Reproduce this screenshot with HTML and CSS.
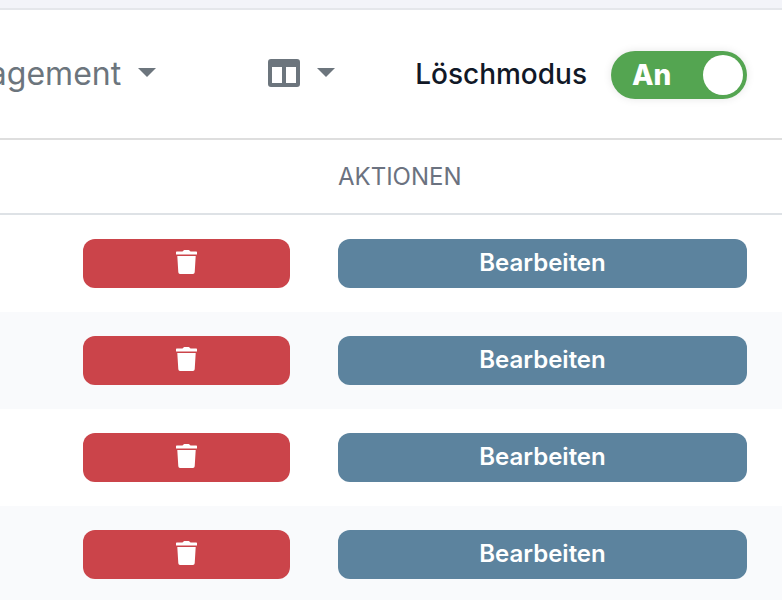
FILE: index.html
```
<!DOCTYPE html>
<html lang="de">
<head>
    <meta charset="UTF-8">
    <meta name="viewport" content="width=device-width, initial-scale=1.0">
    <title>Management</title>
    <link rel="stylesheet" href="styles.css">
</head>
<body>
<div class="card">
    <div class="toolbar">
        <button class="dropdown" type="button">
            <span>agement</span>
            <span class="caret"></span>
        </button>
        <button class="dropdown columns" type="button" aria-label="Spalten">
            <svg width="32" height="28" viewBox="0 0 32 28">
                <path fill="currentColor" fill-rule="evenodd" d="M3 0h26a3 3 0 0 1 3 3v22a3 3 0 0 1-3 3H3a3 3 0 0 1-3-3V3a3 3 0 0 1 3-3zM4 8v16h10V8zM18 8v16h10V8z"/>
            </svg>
            <span class="caret"></span>
        </button>
        <label class="mode-label" for="deleteMode">Löschmodus</label>
        <div class="switch">
            <input type="checkbox" id="deleteMode" checked>
            <span class="switch-text">An</span>
        </div>
    </div>

    <table>
        <thead>
        <tr>
            <th class="col-rest"></th>
            <th class="col-delete"></th>
            <th>AKTIONEN</th>
        </tr>
        </thead>
        <tbody id="rows"></tbody>
    </table>
</div>

<template id="rowTemplate">
    <tr>
        <td></td>
        <td>
            <button class="button delete" type="button" aria-label="Löschen">
                <svg width="21" height="24" viewBox="0 0 21 24">
                    <path fill="#fff" d="M.7 1.500H6.500L7.500.4Q7.800 0 8.300 0h4.400q.5 0 .8.400l1 1.100h5.800q.7 0 .7.700V4.500H0V2.200q0-.7.7-.7zM1.300 6h18.400L18.700 22.200Q18.500 24 17 24H4Q2.500 24 2.300 22.200z"/>
                </svg>
            </button>
        </td>
        <td><button class="button edit" type="button">Bearbeiten</button></td>
    </tr>
</template>

<script>
    const rows = document.getElementById('rows');
    const rowTemplate = document.getElementById('rowTemplate');

    // Zeilen der Tabelle erzeugen
    for (let i = 0; i < 4; i++) {
        rows.appendChild(rowTemplate.content.cloneNode(true));
    }
</script>
</body>
</html>
```
FILE: styles.css
```
body {
    font-family: Inter, "Liberation Sans", sans-serif;
    margin: 0;
    padding-top: 8px;
    background-color: #f3f4f9;
    overflow: hidden;
}

button {
    font-family: inherit;
    border: none;
    cursor: pointer;
}

.card {
    background-color: white;
    border-top: 2px solid #e5e7eb;
}

.toolbar {
    display: flex;
    justify-content: flex-end;
    align-items: center;
    height: 126px;
    padding: 2px 35px 0 0;
    border-bottom: 2px solid #dedede;
}

.dropdown {
    display: flex;
    align-items: center;
    flex-shrink: 0;
    gap: 17px;
    padding: 0 0 2px;
    background: none;
    color: #6c757d;
    font-size: 32px;
    line-height: 48px;
}

.caret {
    margin-bottom: 3px;
    border-top: 9px solid;
    border-left: 9px solid transparent;
    border-right: 9px solid transparent;
}

.columns {
    margin: 0 80px 0 112px;
    padding-bottom: 4px;
}

.columns .caret {
    margin-bottom: 1px;
}

.mode-label {
    margin-right: 24px;
    padding-bottom: 2px;
    color: #111827;
    font-size: 28px;
    font-weight: 500;
}

/* Schalter */
.switch {
    display: grid;
    align-items: center;
    flex-shrink: 0;
    width: 136px;
    height: 48px;
}

.switch input,
.switch-text {
    grid-area: 1 / 1;
}

.switch input {
    appearance: none;
    display: flex;
    width: 100%;
    height: 100%;
    margin: 0;
    padding: 4px;
    box-sizing: border-box;
    border-radius: 24px;
    background-color: #adb5bd;
    box-shadow: 0 0 8px rgba(0, 0, 0, 0.1);
    cursor: pointer;
}

.switch input::before {
    content: "";
    width: 40px;
    height: 40px;
    border-radius: 50%;
    background-color: white;
}

.switch input:checked {
    justify-content: flex-end;
    background-color: #54a551;
}

.switch-text {
    padding-left: 21px;
    color: white;
    font-size: 28px;
    font-weight: 800;
    pointer-events: none;
}

/* Tabelle */
table {
    width: 100%;
    table-layout: fixed;
    border-collapse: separate;
    border-spacing: 0;
}

th {
    height: 73px;
    padding: 0 24px;
    border-bottom: 2px solid #dee2e6;
    color: #6b7280;
    font-size: 24px;
    font-weight: 400;
    text-align: left;
}

.col-rest {
    width: 59px;
    padding: 0;
}

.col-delete {
    width: 207px;
}

td {
    padding: 24px;
}

th:last-child,
td:last-child {
    padding-right: 35px;
}

tbody tr:nth-child(even) {
    background-color: #f9fafc;
}

.button {
    display: flex;
    justify-content: center;
    align-items: center;
    width: 100%;
    height: 49px;
    padding: 0 0 2px;
    border-radius: 12px;
    color: white;
    font-size: 24px;
    font-weight: 600;
}

.delete {
    padding-bottom: 3px;
    background-color: #cb444a;
}

.edit {
    background-color: #5c839e;
}
```
